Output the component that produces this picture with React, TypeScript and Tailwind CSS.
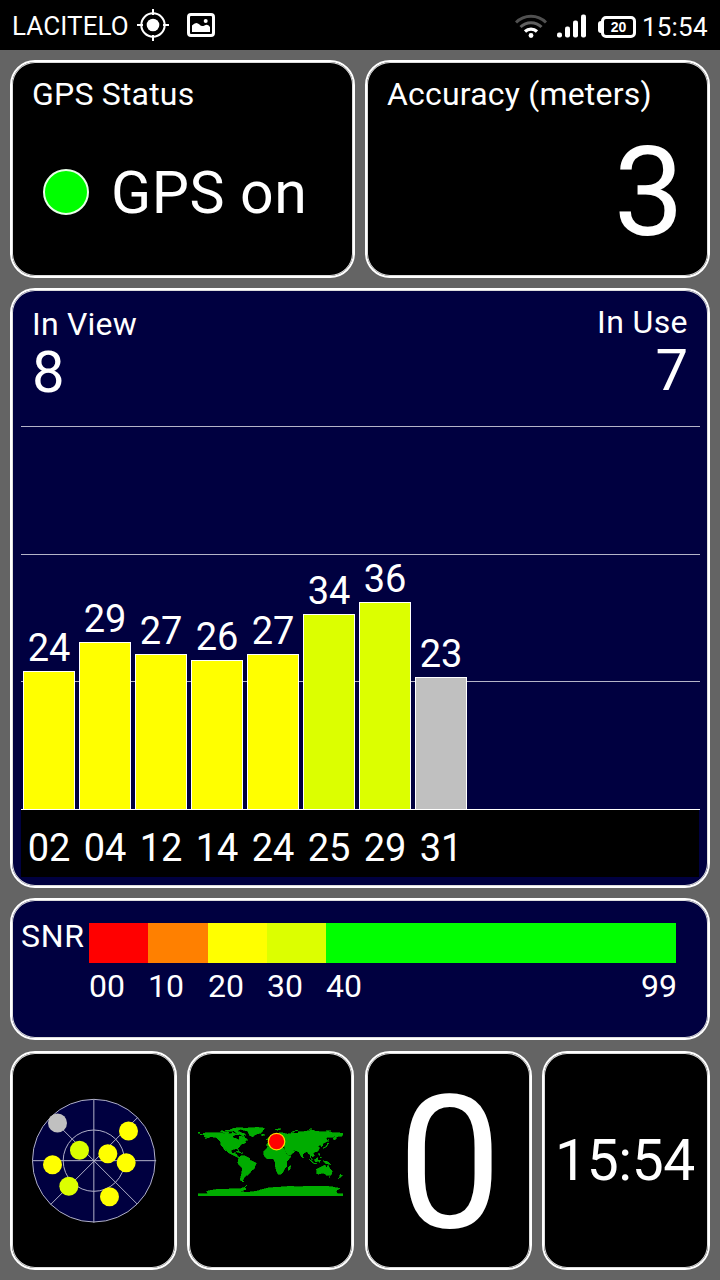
import type { ReactNode } from "react";
import clsx from "clsx";

const satellites = [
  { prn: "02", snr: 24, height: 139, color: "bg-[#ffff00]" },
  { prn: "04", snr: 29, height: 168, color: "bg-[#ffff00]" },
  { prn: "12", snr: 27, height: 156, color: "bg-[#ffff00]" },
  { prn: "14", snr: 26, height: 150, color: "bg-[#ffff00]" },
  { prn: "24", snr: 27, height: 156, color: "bg-[#ffff00]" },
  { prn: "25", snr: 34, height: 196, color: "bg-[#dcff00]" },
  { prn: "29", snr: 36, height: 208, color: "bg-[#dcff00]" },
  { prn: "31", snr: 23, height: 133, color: "bg-[#c0c0c0]" },
];

const radarDots = [
  { x: 142, y: 129, color: "#c0c0c0" },
  { x: 355, y: 153, color: "#ffff00" },
  { x: 208, y: 211, color: "#dcff00" },
  { x: 293, y: 221, color: "#ffff00" },
  { x: 348, y: 248, color: "#ffff00" },
  { x: 127, y: 254, color: "#ffff00" },
  { x: 176, y: 319, color: "#dcff00" },
  { x: 298, y: 350, color: "#ffff00" },
];

// land outlines in degrees, y is negated latitude
const land = [
  "M-168,-66 L-166,-69 -156,-71 -141,-70 -128,-70 -115,-68 -108,-68 -96,-68 -94,-72 -90,-69 -86,-68 -82,-69 -82,-67 -87,-65 -94,-61 -94,-58 -88,-56 -82,-55 -80,-51 -78,-55 -77,-62 -70,-61 -65,-59 -60,-55 -56,-52 -65,-50 -64,-48 -60,-46 -66,-43 -70,-43 -74,-40 -76,-35 -81,-31 -80,-25 -82,-28 -84,-30 -90,-29 -97,-27 -97,-21 -94,-18 -91,-19 -87,-21 -88,-16 -83,-15 -83,-10 -78,-9 -79,-7 -85,-10 -92,-14 -98,-16 -105,-20 -109,-26 -114,-31 -112,-26 -110,-23 -115,-28 -118,-34 -124,-40 -124,-48 -131,-54 -136,-59 -148,-60 -154,-58 -162,-55 -158,-58 -165,-61 -162,-64Z",
  "M-85,-65 L-82,-70 -90,-73 -84,-74 -75,-72 -68,-69 -62,-66 -67,-62 -73,-64 -77,-66Z",
  "M-118,-70 L-115,-73 -106,-73 -102,-69 -110,-68Z",
  "M-125,-72 L-122,-76 -115,-74 -119,-71Z",
  "M-112,-75 L-108,-77 -97,-76 -94,-78 -101,-79 -96,-80 -90,-82 -76,-83 -64,-82 -76,-79 -80,-76 -92,-75 -98,-74Z",
  "M-73,-78 L-60,-82 -33,-84 -15,-82 -19,-76 -23,-70 -34,-67 -41,-63 -44,-60 -51,-63 -54,-69 -57,-75Z",
  "M-24,-65 L-18,-67 -13,-65 -19,-63Z",
  "M-85,-22 L-80,-24 -74,-20 -78,-20Z M-74,-18 L-69,-20 -68,-18Z",
  "M-78,-8 L-72,-12 -62,-11 -52,-5 -50,0 -43,3 -35,6 -38,13 -40,21 -48,26 -53,34 -57,37 -62,39 -65,43 -67,47 -69,51 -65,55 -72,53 -75,48 -73,39 -71,30 -70,18 -76,14 -81,6 -80,-1Z",
  "M-17,-15 L-17,-22 -10,-30 -6,-35 4,-37 11,-37 10,-34 20,-31 33,-31 36,-24 43,-12 51,-12 46,-3 40,3 40,15 35,21 32,28 27,34 19,35 15,27 12,16 12,7 9,-1 8,-5 -3,-5 -9,-5 -14,-9Z",
  "M44,24 L44,17 50,13 49,20 47,25Z",
  "M-9,-37 L-9,-43 -2,-44 -4,-48 3,-51 9,-54 8,-57 12,-55 20,-55 24,-59 29,-60 22,-61 25,-65 17,-61 16,-56 12,-57 5,-59 5,-62 14,-68 26,-71 41,-67 33,-66 44,-66 44,-68 60,-69 68,-69 69,-73 80,-73 92,-75 105,-77 113,-74 127,-73 140,-73 152,-71 170,-70 180,-69 180,-66 177,-62 163,-60 163,-55 157,-51 156,-57 163,-62 152,-59 142,-59 135,-54 141,-53 140,-48 131,-43 129,-36 126,-34 126,-39 121,-39 118,-37 122,-31 118,-24 109,-21 106,-19 109,-12 104,-9 101,-13 100,-8 104,-1 99,-8 98,-16 94,-17 91,-22 86,-21 80,-15 80,-10 77,-8 73,-18 71,-21 67,-24 57,-26 50,-30 56,-25 60,-22 52,-16 44,-13 39,-21 35,-28 36,-36 27,-37 26,-40 22,-37 19,-42 13,-45 18,-40 15,-38 9,-44 3,-43 -1,-38 -6,-36Z",
  "M-5,-50 L1,-51 0,-54 -3,-58 -6,-57 -4,-53Z M-10,-52 L-6,-53 -7,-55 -10,-54Z",
  "M11,-79 L20,-80 27,-80 18,-77Z M52,-71 L57,-74 68,-77 61,-75 57,-71Z M95,-79 L100,-81 104,-79Z M137,-75 L150,-75 143,-73Z",
  "M130,-32 L136,-35 140,-38 141,-44 145,-43 142,-40 140,-35 135,-33 131,-31Z M142,-46 L143,-54 144,-49Z",
  "M80,-9 L82,-7 80,-6Z M95,-5 L103,2 106,6 102,4Z M105,6 L115,8 110,8Z M109,-2 L117,-7 118,-2 116,4 111,3Z M119,0 L125,-1 121,1 123,5 120,5Z M120,-18 L122,-17 122,-13 120,-14Z M122,-9 L126,-8 125,-6Z",
  "M131,1 L138,2 146,6 150,10 143,9 138,8Z",
  "M114,22 L122,18 129,14 136,12 137,16 141,17 142,11 146,19 153,26 152,34 148,38 140,38 136,34 129,32 118,35 115,33Z M145,41 L148,41 147,43Z",
  "M173,35 L178,38 175,42 167,46 172,42Z",
  "M-180,85 L-156,84 -158,78 -145,75 -130,73 -105,73 -98,71 -78,72 -67,69 -62,64 -58,62 -64,68 -60,73 -75,78 -60,81 -35,78 -20,73 -8,70 10,68 30,67 50,65 70,67 88,65 110,65 135,65 155,67 172,71 163,77 166,84 180,85 180,90 -180,90Z",
  "M-180,-71 L-176,-71 -176,-69 -180,-69Z M-174,-67 L-169,-67 -169,-65 -174,-65Z",
];

function Card({ className, children }: { className?: string; children: ReactNode }) {
  return (
    <div
      className={clsx(
        "rounded-[25px] border-2 border-white shadow-[inset_0_0_0_1px_#dcdcdc]",
        className
      )}
    >
      {children}
    </div>
  );
}

function StatusBar() {
  return (
    <header className="flex h-[50px] items-center bg-black pl-[12px] pr-[12px] pt-[2px]">
      <span className="w-[125px] whitespace-nowrap text-[26px] leading-[30px] tracking-[0.1px]">
        LACITELO
      </span>
      <svg className="mb-[2px] h-[34px] w-[34px]" viewBox="0 0 34 34" fill="none" stroke="#fff">
        <circle cx="16" cy="17" r="11.7" strokeWidth="2" />
        <circle cx="16" cy="17" r="6.3" fill="#fff" stroke="none" />
        <path d="M16 1v6M16 27v6M0 17h6M26 17h6" strokeWidth="2" />
      </svg>
      <svg className="ml-[16px] mb-[2px] h-[24px] w-[28px]" viewBox="0 0 28 24">
        <rect x="1.5" y="1.5" width="25" height="21" rx="2.5" fill="none" stroke="#fff" strokeWidth="3" />
        <path d="M5 19V12.500q4-4.500 7.500-1q2 2.500 5 1q3-2 5.500 1.500v5z" fill="#fff" />
        <circle cx="18.700" cy="8" r="2" fill="#fff" />
      </svg>
      <div className="ml-auto flex items-center">
        <svg className="h-[26px] w-[32px]" viewBox="0 0 32 26" fill="none" strokeWidth="3">
          <path d="M1 9.500a21 21 0 0 1 30 0" stroke="#505050" />
          <path d="M5.500 14a15 15 0 0 1 21 0" stroke="#606060" />
          <path d="M10 18.500a8.800 8.800 0 0 1 12 0" stroke="#fff" strokeWidth="3.200" />
          <circle cx="16" cy="22.500" r="2.400" fill="#fff" />
        </svg>
        <svg className="ml-[10px] h-[24px] w-[30px]" viewBox="0 0 30 24" fill="#fff">
          <rect x="0" y="18.500" width="5" height="5" rx="2" />
          <rect x="8" y="12.500" width="5" height="11" rx="2" />
          <rect x="16" y="6.500" width="5" height="17" rx="2" />
          <rect x="24" y="0.500" width="5" height="23" rx="2" />
        </svg>
        <div className="ml-[11px] flex items-center pt-[1px]">
          <div className="h-[12px] w-[3px] rounded-l-[3px] bg-white" />
          <div className="flex h-[22px] w-[35px] items-center justify-center rounded-[5px] border-3 border-white font-['Liberation_Sans'] text-[14px] font-bold leading-none">
            20
          </div>
        </div>
        <span className="ml-[6px] w-[66px] whitespace-nowrap pt-[2px] text-[26px] leading-[30px] tracking-[0.2px]">
          15:54
        </span>
      </div>
    </header>
  );
}

function SignalChart() {
  return (
    <Card className="flex h-[600px] flex-col bg-[#000040] pl-[9px] pr-[8px] pt-[15px]">
      <div className="flex justify-between pl-[11px] pr-[12px]">
        <div>
          <div className="pt-[1px] text-[32px] leading-[36px] tracking-[0.2px]">In View</div>
          <div className="text-[58px] leading-[60px]">8</div>
        </div>
        <div className="text-right">
          <div className="text-[32px] leading-[34px] tracking-[0.4px]">In Use</div>
          <div className="text-[58px] leading-[62px]">7</div>
        </div>
      </div>
      <div className="relative mt-auto flex h-[384px] items-end gap-[4px] pl-[2px]">
        <div className="absolute inset-0 flex flex-col justify-between">
          <div className="h-px bg-[#b4b4c8]" />
          <div className="h-px bg-[#b4b4c8]" />
          <div className="h-px bg-[#b4b4c8]" />
          <div className="h-px bg-white" />
        </div>
        {satellites.map((sat) => (
          <div key={sat.prn} className="relative w-[52px] text-center">
            <div className="pb-[4px] text-[38px] leading-[38px]">{sat.snr}</div>
            <div className={clsx("border border-white", sat.color)} style={{ height: sat.height }} />
          </div>
        ))}
      </div>
      <div className="mb-[9px] mr-[1px] flex h-[67px] gap-[4px] bg-black pl-[2px] pt-[18px]">
        {satellites.map((sat) => (
          <div key={sat.prn} className="w-[52px] text-center text-[38px] leading-[41px]">
            {sat.prn}
          </div>
        ))}
      </div>
    </Card>
  );
}

function SnrScale() {
  return (
    <Card className="flex h-[142px] bg-[#000040] pl-[9px] pt-[23px] text-[32px]">
      <div className="w-[68px] leading-[26px] tracking-[0.7px]">SNR</div>
      <div>
        <div className="flex h-[40px]">
          <div className="w-[59px] bg-[#ff0000]" />
          <div className="w-[60px] bg-[#ff8000]" />
          <div className="w-[59px] bg-[#ffff00]" />
          <div className="w-[59px] bg-[#dcff00]" />
          <div className="w-[350px] bg-[#00ff00]" />
        </div>
        <div className="flex pt-[4px] leading-[38px]">
          <div className="w-[59px]">00</div>
          <div className="w-[60px]">10</div>
          <div className="w-[59px]">20</div>
          <div className="w-[59px]">30</div>
          <div className="flex w-[351px] justify-between">
            <span>40</span>
            <span>99</span>
          </div>
        </div>
      </div>
    </Card>
  );
}

function Radar() {
  return (
    <svg className="h-[126px] w-[126px]" viewBox="62.5 54 378 378" fill="none" stroke="#b0b0c8" strokeWidth="3">
      <circle cx="251" cy="242" r="184" fill="#000040" />
      <circle cx="251" cy="242" r="92" />
      <path d="M251 58v370M67 242h371M121 112l260 260M121 374l262 -262" />
      {radarDots.map((dot) => (
        <circle key={dot.x} cx={dot.x} cy={dot.y} r="28.500" fill={dot.color} stroke="none" />
      ))}
    </svg>
  );
}

function WorldMap() {
  return (
    <svg className="h-[71px] w-[145px]" viewBox="-180 -90 360 180" preserveAspectRatio="none">
      <g fill="#00ac00" stroke="#00ac00" strokeWidth="1.500" shapeRendering="crispEdges">
        {land.map((d) => (
          <path key={d} d={d} />
        ))}
      </g>
      <ellipse cx="15" cy="-48" rx="20.500" ry="21" fill="#ff0000" stroke="#ffd800" strokeWidth="3" />
    </svg>
  );
}

export default function App() {
  return (
    <div className="h-[1280px] w-[720px] overflow-hidden bg-[#646464] font-[Roboto,sans-serif] text-white">
      <StatusBar />
      <main className="flex flex-col px-[10px] pt-[10px]">
        <div className="flex gap-[10px]">
          <Card className="h-[218px] w-[345px] bg-black pl-[20px] pt-[14px]">
            <div className="text-[32px] leading-[36px] tracking-[0.2px]">GPS Status</div>
            <div className="mt-[43px] flex items-center gap-[22px] pl-[11px]">
              <div className="h-[46px] w-[46px] rounded-full border-2 border-[#e8ffe8] bg-[#00ff00]" />
              <div className="pt-[2px] text-[59px] leading-[72px] tracking-[0.5px]">GPS on</div>
            </div>
          </Card>
          <Card className="h-[218px] w-[345px] bg-black px-[20px] pt-[14px]">
            <div className="text-[32px] leading-[36px] tracking-[0.2px]">Accuracy (meters)</div>
            <div className="pt-[18px] pr-[4px] text-right text-[125px] leading-[125px]">3</div>
          </Card>
        </div>
        <div className="mt-[10px]">
          <SignalChart />
        </div>
        <div className="mt-[10px]">
          <SnrScale />
        </div>
        <div className="mt-[11px] flex justify-between">
          <Card className="flex h-[219px] w-[167px] items-center justify-center bg-black">
            <Radar />
          </Card>
          <Card className="flex h-[219px] w-[167px] items-center justify-center bg-black">
            <WorldMap />
          </Card>
          <Card className="flex h-[219px] w-[167px] items-center justify-center bg-black pl-[3px] pt-[4px]">
            <span className="text-[186px] leading-[200px]">0</span>
          </Card>
          <Card className="flex h-[219px] w-[168px] items-center justify-center bg-black pr-[2px] pt-[1px]">
            <span className="text-[57px] leading-[64px] tracking-[-0.4px]">15:54</span>
          </Card>
        </div>
      </main>
    </div>
  );
}
